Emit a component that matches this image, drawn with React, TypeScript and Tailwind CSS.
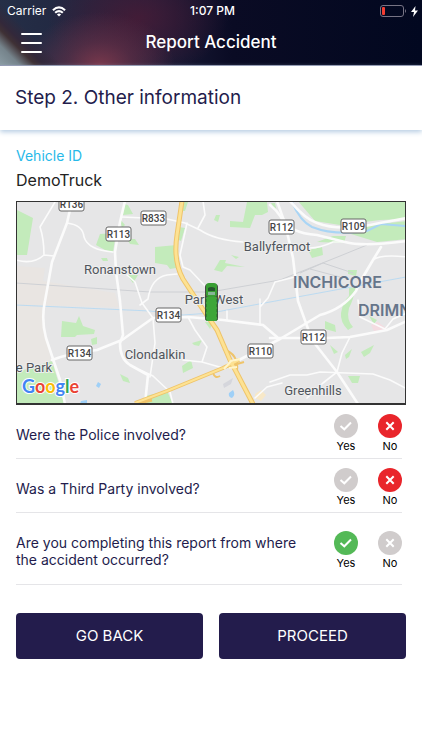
import { useState } from 'react'

const questions = [
  { id: 'police', text: 'Were the Police involved?', answer: 'no', spacing: 'pt-[9px] pb-1' },
  { id: 'third-party', text: 'Was a Third Party involved?', answer: 'no', spacing: 'pt-[9px] pb-1' },
  {
    id: 'location',
    text: 'Are you completing this report from where the accident occurred?',
    answer: 'yes',
    spacing: 'pt-[18px] pb-[13px]',
  },
]

const parks = [
  '2,9 8,12 18,17 12,54 2,54',
  '85,33 101,32 98,51 90,49 81,44',
  '86,57 92,57 93,60 88,60',
  '109,3 113,4 118,13 108,14',
  '105,18 110,24 107,27',
  '112,38 120,38 124,44 115,43',
  '112,74 123,74 118,82',
  '140,46 162,44 161,67 155,68 152,64 140,62',
  '164,26 170,27 166,40 162,38',
  '168,1 173,1 170,10 166,10',
  '232,1 252,1 253,11 247,14 240,14 235,27 215,26 215,20 228,21',
  '201,14 205,14 203,21 199,19',
  '205,59 211,59 210,62 230,66 212,65 207,71 199,69',
  '216,54 224,56 221,58',
  '256,2 262,12 260,2',
  '283,0 392,0 392,18 365,19 342,22 325,24 300,20',
  '336,33 355,24 392,20 392,38 362,41',
  '302,41 318,35 331,35 329,42',
  '293,49 307,46 308,54 297,57',
  '333,69 342,69 341,75 333,73',
  '47,120 61,122 64,115 68,125 80,129 79,133 62,134 60,136 46,136',
  '76,138 82,136 82,143 77,144',
  '2,171 37,160 50,203 2,203',
  '105,173 113,177 115,182 108,180',
  '125,203 130,195 152,190 158,203',
  '167,165 176,159 178,167 168,172',
  '177,142 187,139 184,145 179,144',
  '190,121 198,121 195,128',
  '310,120 320,124 321,131 310,128',
  '315,144 323,151 319,153',
  '330,154 337,148 334,156 331,158',
  '346,151 359,144 355,152 349,156',
  '333,175 345,175 343,182 337,182',
  '354,115 362,119 359,123',
]

const roads = [
  'M57 0 L52 22 L37 61 L30 100 Q26 118 31 137 L45 179 L50 203',
  'M110 0 L105 21 L100 51 L101 71 L105 100 L108 134 L105 142 Q105 158 115 164 L133 174 L130 203',
  'M37 159 Q55 152 82 149 L107 139 L138 117 L173 116 L208 119 L248 124 L262 136',
  'M262 0 L268 17 Q274 32 302 34 L330 41 Q348 46 392 40',
  'M275 0 Q290 18 302 22 Q325 31 365 22 L392 17',
  'M255 4 Q268 14 272 31 L278 57 L283 100 L297 139 L322 171 L343 203',
  'M222 160 L265 138 L305 114 Q328 108 341 90 L345 81 L358 59 L366 46',
  'M255 137 L312 137 L335 136 L372 129 L392 120',
]

const streets = [
  'M40 1 L25 26 Q29 38 29 54 L39 55 M1 59 Q18 64 29 54',
  'M52 22 Q68 24 69 36 Q73 49 98 51',
  'M107 16 L152 18 L170 22 L185 29 Q200 39 228 41',
  'M188 0 L190 14 L183 27',
  'M172 22 L165 54 L168 66 L175 69 L192 87',
  'M125 104 L133 98 Q136 77 152 74 L162 73',
  'M112 74 L120 81 L127 102 L138 117 L140 142 L135 176',
  'M173 116 L180 129 L192 146 L187 161 L208 167 M168 159 L187 161',
  'M125 169 L138 175 L155 191 L158 203',
  'M245 98 V124 M212 110 V119 M245 106 L253 97 L260 81 L280 76',
  'M358 59 Q365 53 392 56',
  'M295 47 Q305 47 318 41 L330 41',
  'M335 136 L327 152 L322 171 L308 182 L292 197',
  'M255 181 L275 174 L292 174 L305 171 L358 173 L375 179 L392 188',
  'M343 99 L345 116 L370 128 L378 118 L392 112',
  'M240 197 L252 186 L267 182',
]

const shields = [
  { x: 56, y: 3, label: 'R136' },
  { x: 138, y: 17, label: 'R833' },
  { x: 103, y: 33, label: 'R113' },
  { x: 266, y: 26, label: 'R112' },
  { x: 338, y: 25, label: 'R109' },
  { x: 153, y: 114, label: 'R134' },
  { x: 64, y: 152, label: 'R134' },
  { x: 245, y: 150, label: 'R110' },
  { x: 298, y: 136, label: 'R112' },
]

const places = [
  { x: 104, y: 73, label: 'Ronanstown' },
  { x: 261, y: 50, label: 'Ballyfermot' },
  { x: 198, y: 103, label: 'Park West' },
  { x: 139, y: 158, label: 'Clondalkin' },
  { x: 18, y: 171, label: 'e Park' },
  { x: 297, y: 194, label: 'Greenhills' },
]

function StatusBar() {
  return (
    <div className="grid grid-cols-3 items-center h-[22px] pl-[7px] pr-1 text-xs">
      <div className="flex items-center gap-1.5">
        <span>Carrier</span>
        <svg width="14" height="11" viewBox="0 0 15 11" fill="none" stroke="white" strokeWidth="2.3">
          <path d="M1 4.2 Q7.5 -1.8 14 4.2" />
          <path d="M3.4 6.9 Q7.5 3.1 11.6 6.9" />
          <path d="M7.5 10.8 L5.3 8.6 Q7.5 6.7 9.7 8.6 Z" fill="white" stroke="none" />
        </svg>
      </div>
      <span className="text-center font-medium">1:07 PM</span>
      <div className="flex items-center justify-end gap-1">
        <svg width="27" height="12" viewBox="0 0 27 12" fill="none">
          <rect x="0.5" y="0.5" width="23" height="11" rx="2.5" stroke="#777485" />
          <rect x="2" y="2" width="3" height="8" rx="1" fill="#f43d32" />
          <path d="M25 4 Q27 6 25 8 Z" fill="#777485" />
        </svg>
        <svg width="7" height="11" viewBox="0 0 7 11" fill="white">
          <path d="M4.5 0 L0 6 H3 L2 11 L7 4.5 H4 Z" />
        </svg>
      </div>
    </div>
  )
}

function Header() {
  return (
    <header className="h-[66px] text-white border-b border-[#8e93ad] bg-[linear-gradient(45deg,#8a9ba3_0px,#75838b_14px,#3f3135_25px,#33283a_31px,transparent_44px),radial-gradient(ellipse_75px_54px_at_100px_66px,#7a384c_0%,#70344a88_45%,transparent_100%),radial-gradient(ellipse_90px_60px_at_138px_18px,#4a1b36d0_0%,#4a1b3670_50%,transparent_100%),linear-gradient(90deg,#252f47_0%,#1d1f3b_35%,#0a0b24_55%,#020820_100%)]">
      <StatusBar />
      <div className="grid grid-cols-[1fr_auto_1fr] items-center h-[42px] px-5">
        <button type="button" aria-label="Menu" className="flex w-[22px] flex-col gap-[7px] pl-px">
          <span className="h-[2px] w-full rounded bg-white" />
          <span className="h-[2px] w-full rounded bg-white" />
          <span className="h-[2px] w-full rounded bg-white" />
        </button>
        <h1 className="text-[17px] font-medium">Report Accident</h1>
      </div>
    </header>
  )
}

function Truck() {
  return (
    <g>
      <rect x="190" y="83" width="13" height="37" rx="3" fill="#454b45" />
      <rect x="191" y="82" width="11" height="14" rx="3" fill="#389e32" />
      <path d="M193 87 Q196 85 200 87 V90 H193 Z" fill="#24552c" />
      <rect x="193" y="91" width="7" height="3" fill="#86b596" />
      <rect x="191" y="96" width="11" height="24" rx="1" fill="#3da638" />
      <path d="M191 98 V119 M202 98 V119" stroke="#28672a" strokeDasharray="3 2" />
    </g>
  )
}

function VehicleMap() {
  return (
    <div className="h-[204px] overflow-hidden border border-[#333] border-b-2 bg-[#e6e6e7]">
      <svg
        className="block h-full w-full font-[Roboto,sans-serif]"
        viewBox="1 1 390 201"
        preserveAspectRatio="xMidYMid slice"
        role="img"
        aria-label="Map of the vehicle location"
      >
        <path d="M1 65 L30 67 L28 80 L100 92 L104 106 L1 104 Z" fill="#e9e5e2" />
        <path d="M1 104 L28 106 L27 116 L36 159 L1 171 Z" fill="#e9e6e3" />
        {parks.map((points) => (
          <polygon key={points} points={points} fill="#c3ebbb" />
        ))}
        <path d="M334 87 L341 86 Q338 100 334 107 Q331 119 338 126 L333 129 Q325 121 326 112 Q328 100 334 95 Z" fill="#c3ebbb" />
        <path d="M356 124 L363 121 L372 128 L359 130 Z" fill="#f4dce1" />
        <path d="M240 193 L246 189 L251 194 L246 200 L240 197 Z" fill="#f7e8c8" />
        <path d="M208 183 L218 177 L216 183 L209 187 Z" fill="#d5d6dc" />

        {/* water */}
        <g fill="none" stroke="#a9d5f5">
          <path d="M1 104 L135 110 L168 114 L196 112 L255 101 L391 76" strokeOpacity="0.7" />
          <path d="M277 1 Q285 20 297 26 Q320 35 352 30 L366 23 L390 25" strokeWidth="2" />
        </g>
        <path d="M218 189 Q221 194 217 197 Q213 196 214 192 Z M83 181 L86 183 L84 187 L81 185 Z M66 200 L72 199 V203 H65 Z" fill="#9fd0f7" />

        {/* railway */}
        <g fill="none" stroke="#ced0d4">
          <path d="M1 82 L135 91 L195 91 L265 79 L325 55 L352 44" />
          <path d="M285 72 L308 62 L338 72 M295 68 L325 76" />
        </g>

        <g fill="none" stroke="#fbfbfb" strokeLinecap="round" strokeLinejoin="round">
          {streets.map((d) => (
            <path key={d} d={d} strokeWidth="1.6" />
          ))}
          {roads.map((d) => (
            <path key={d} d={d} strokeWidth="2.6" />
          ))}
        </g>

        {/* motorways */}
        <g fill="none" stroke="#efc46a" strokeWidth="5">
          <path d="M167 0 L162 34 Q158 60 168 78 L185 104 L202 129 L215 159 L238 203" />
          <path d="M120 202 L152 190 L208 167 L224 159" strokeWidth="4" />
          <path d="M208 148 Q224 153 222 170 M198 172 Q200 178 205 175 M205 168 L229 161" strokeWidth="2" />
          <path d="M120 203 L137 199" strokeWidth="3" />
        </g>
        <g fill="none" stroke="#fde293" strokeWidth="3">
          <path d="M167 0 L162 34 Q158 60 168 78 L185 104 L202 129 L215 159 L238 203" />
          <path d="M120 202 L152 190 L208 167 L224 159" strokeWidth="2" />
        </g>
        <path d="M209 168 L216 160 L225 158 M214 167 L222 166" fill="none" stroke="#fff5cb" strokeWidth="2" />

        {shields.map(({ x, y, label }) => (
          <g key={`${label}-${x}`}>
            <rect x={x - 12} y={y - 7} width="25" height="14" rx="2" fill="white" stroke="#666" />
            <text x={x + 0.5} y={y + 4} textAnchor="middle" fontSize="10" fontWeight="500" fill="#444">
              {label}
            </text>
          </g>
        ))}
        <g fill="#50555c" stroke="#eeeeee" strokeWidth="2" paintOrder="stroke" textAnchor="middle" fontSize="13">
          {places.map(({ x, y, label }) => (
            <text key={label} x={x + 1} y={y}>
              {label}
            </text>
          ))}
        </g>
        <g fill="#66758a" fontFamily="Inter, sans-serif" fontSize="16" fontWeight="600">
          <text x="278" y="87">INCHICORE</text>
          <text x="343" y="115">DRIMNAGH</text>
        </g>
        <text x="7" y="192" fontSize="18" fontWeight="700" stroke="white" strokeWidth="2" paintOrder="stroke" fontFamily="Lato, sans-serif">
          <tspan fill="#4285f4">G</tspan>
          <tspan fill="#ea4335">o</tspan>
          <tspan fill="#fbbc05">o</tspan>
          <tspan fill="#4285f4">g</tspan>
          <tspan fill="#34a853">l</tspan>
          <tspan fill="#ea4335">e</tspan>
        </text>
        <Truck />
      </svg>
    </div>
  )
}

type ChoiceProps = {
  name: string
  value: 'yes' | 'no'
  checked: boolean
  onChange: () => void
}

function Choice({ name, value, checked, onChange }: ChoiceProps) {
  const isYes = value === 'yes'
  return (
    <label className="flex w-6 cursor-pointer flex-col items-center">
      <span className="grid size-6 place-items-center">
        <input
          type="radio"
          name={name}
          value={value}
          checked={checked}
          onChange={onChange}
          className={`col-start-1 row-start-1 size-6 appearance-none rounded-full bg-[#d0cccc] ${
            isYes ? 'checked:bg-[#54b957]' : 'checked:bg-[#e9252b]'
          }`}
        />
        <svg
          className="pointer-events-none col-start-1 row-start-1 size-6"
          viewBox="0 0 24 24"
          fill="none"
          stroke="white"
          strokeWidth="2"
        >
          <path d={isYes ? 'M6.5 12 L10.3 15.3 L17 8.5' : 'M8.3 8.3 L15.7 15.7 M15.7 8.3 L8.3 15.7'} />
        </svg>
      </span>
      <span className="text-[11px] leading-4 text-black">{isYes ? 'Yes' : 'No'}</span>
    </label>
  )
}

export default function App() {
  const [answers, setAnswers] = useState<Record<string, string>>(
    Object.fromEntries(questions.map((q) => [q.id, q.answer]))
  )

  return (
    <div className="min-h-screen bg-white font-[Inter,sans-serif] text-[#231c4c]">
      <Header />
      <div className="flex h-16 items-center px-[15px] shadow-[0_2px_5px_#b5cce2]">
        <h2 className="text-[19px]">Step 2. Other information</h2>
      </div>

      <main className="px-4 pt-4">
        <p className="text-sm leading-5 text-[#27b9e9]">Vehicle ID</p>
        <p className="mb-[6px] text-base leading-[29px] text-[#222]">DemoTruck</p>
        <VehicleMap />

        <form onSubmit={(e) => e.preventDefault()}>
          <div className="mr-1">
            {questions.map((q) => (
              <fieldset key={q.id} className={`border-b border-[#e5e5e8] ${q.spacing}`} aria-labelledby={q.id}>
                <div className="flex items-center justify-between gap-4">
                  <p id={q.id} className="text-sm leading-[17px]">
                    {q.text}
                  </p>
                  <div className="flex shrink-0 gap-5">
                    {(['yes', 'no'] as const).map((value) => (
                      <Choice
                        key={value}
                        name={q.id}
                        value={value}
                        checked={answers[q.id] === value}
                        onChange={() => setAnswers({ ...answers, [q.id]: value })}
                      />
                    ))}
                  </div>
                </div>
              </fieldset>
            ))}
          </div>

          <div className="mt-7 grid grid-cols-2 gap-4 pb-8">
            <button type="button" className="h-[46px] rounded bg-[#231c4c] text-[15px] text-white">
              GO BACK
            </button>
            <button type="submit" className="h-[46px] rounded bg-[#231c4c] text-[15px] text-white">
              PROCEED
            </button>
          </div>
        </form>
      </main>
    </div>
  )
}
